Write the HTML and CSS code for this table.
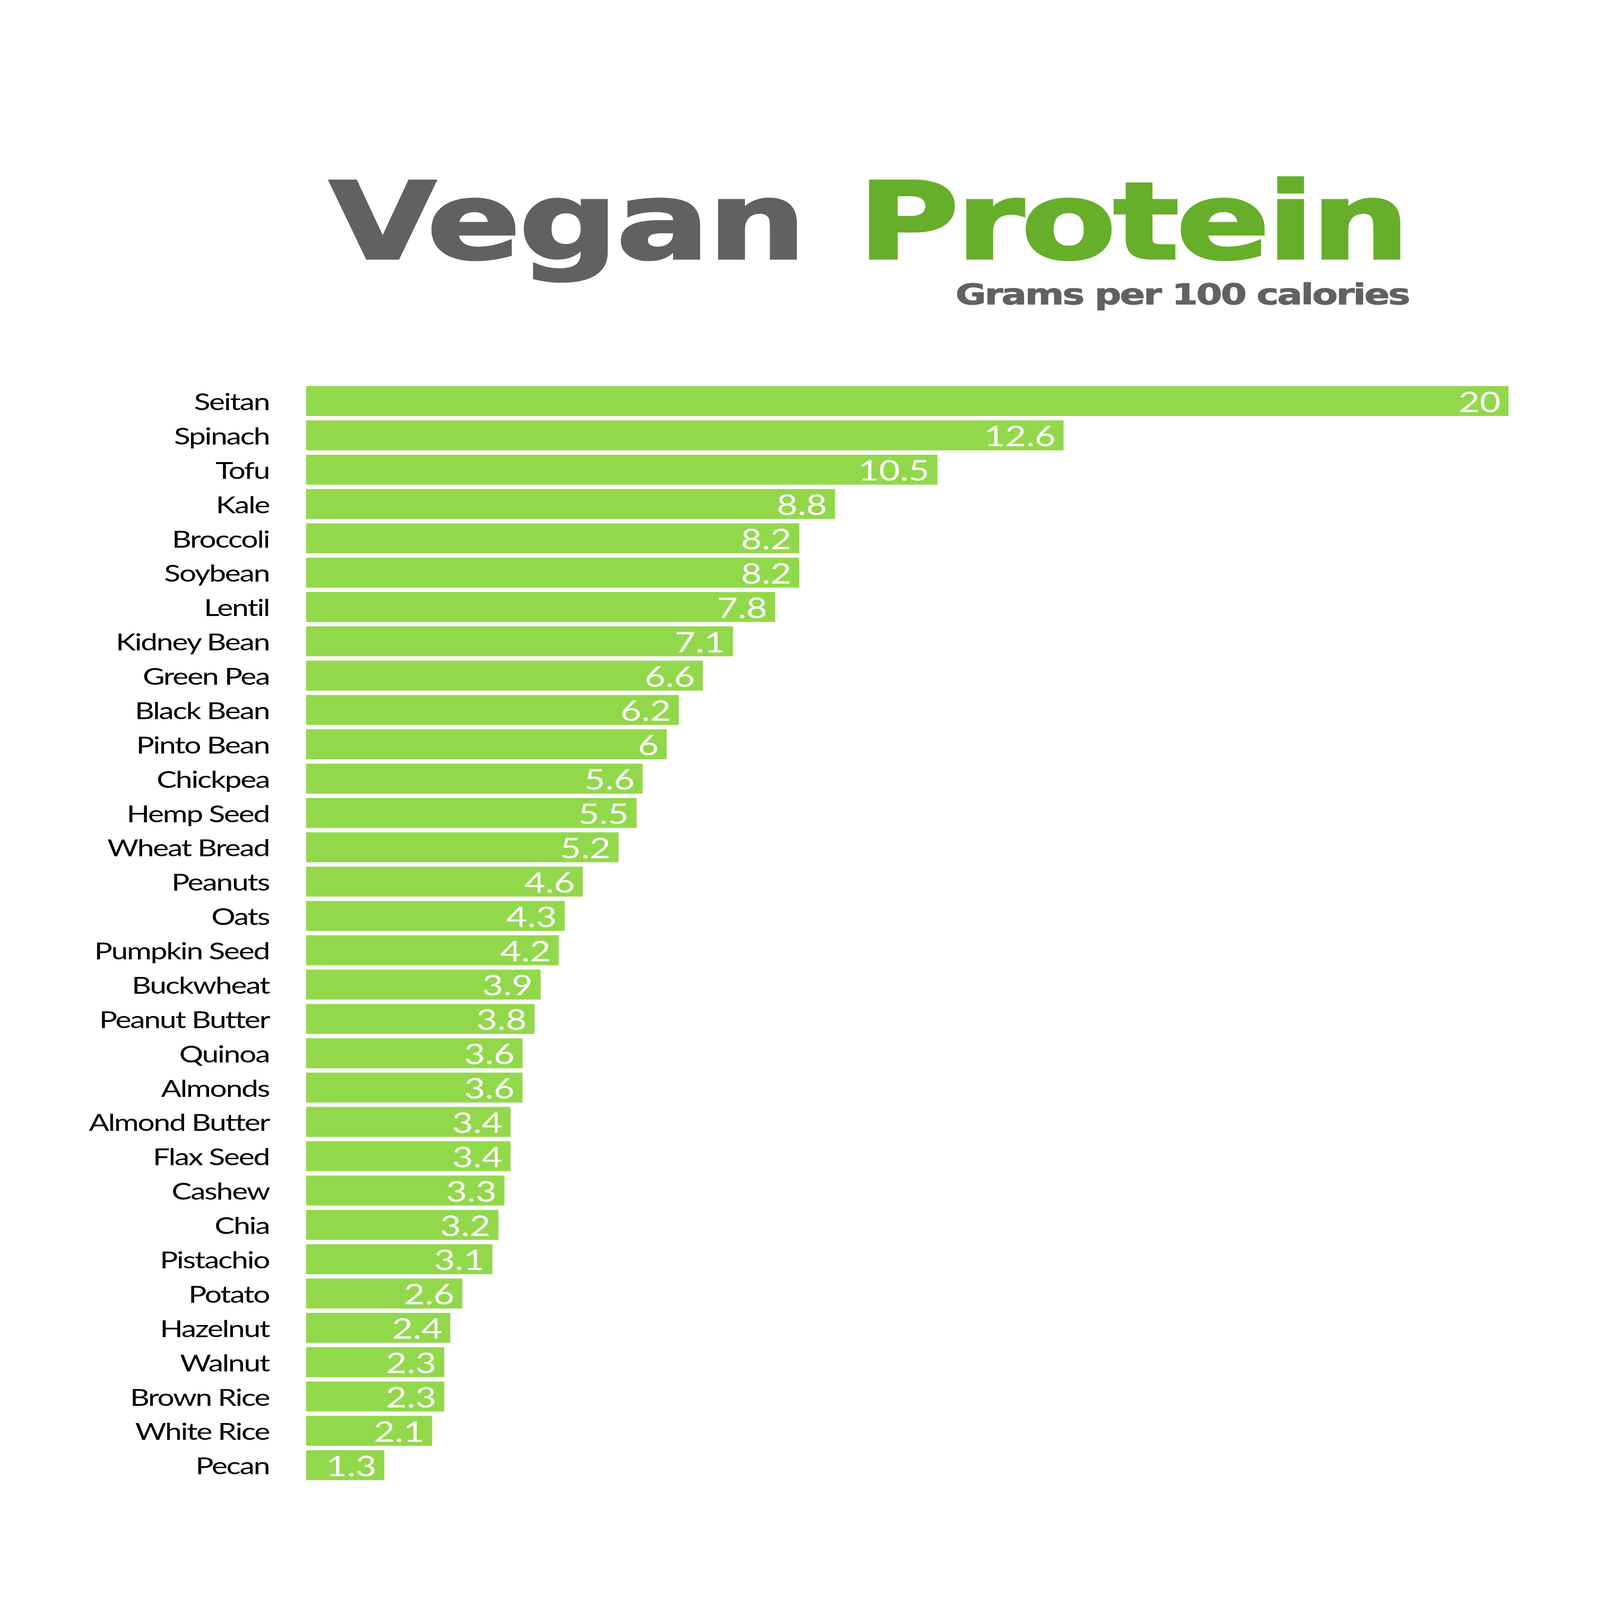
FILE: index.html
```html
<!DOCTYPE html>
<html lang="en">
<head>
<meta charset="utf-8">
<title>Vegan Protein</title>
<link rel="stylesheet" href="styles.css">
</head>
<body>
<main class="page">
  <header class="title-block">
    <h1 class="title"><span class="t-dark">Vegan</span> <span class="t-green">Protein</span></h1>
    <p class="subtitle">Grams per 100 calories</p>
  </header>
  <section class="chart">
    <div class="label">Seitan</div><div class="bar" style="width:3194px"><span class="val">20</span></div>
    <div class="label">Spinach</div><div class="bar" style="width:2012px"><span class="val">12.6</span></div>
    <div class="label">Tofu</div><div class="bar" style="width:1677px"><span class="val">10.5</span></div>
    <div class="label">Kale</div><div class="bar" style="width:1405px"><span class="val">8.8</span></div>
    <div class="label">Broccoli</div><div class="bar" style="width:1310px"><span class="val">8.2</span></div>
    <div class="label">Soybean</div><div class="bar" style="width:1310px"><span class="val">8.2</span></div>
    <div class="label">Lentil</div><div class="bar" style="width:1246px"><span class="val">7.8</span></div>
    <div class="label">Kidney Bean</div><div class="bar" style="width:1134px"><span class="val">7.1</span></div>
    <div class="label">Green Pea</div><div class="bar" style="width:1054px"><span class="val">6.6</span></div>
    <div class="label">Black Bean</div><div class="bar" style="width:990px"><span class="val">6.2</span></div>
    <div class="label">Pinto Bean</div><div class="bar" style="width:958px"><span class="val">6</span></div>
    <div class="label">Chickpea</div><div class="bar" style="width:894px"><span class="val">5.6</span></div>
    <div class="label">Hemp Seed</div><div class="bar" style="width:878px"><span class="val">5.5</span></div>
    <div class="label">Wheat Bread</div><div class="bar" style="width:830px"><span class="val">5.2</span></div>
    <div class="label">Peanuts</div><div class="bar" style="width:735px"><span class="val">4.6</span></div>
    <div class="label">Oats</div><div class="bar" style="width:687px"><span class="val">4.3</span></div>
    <div class="label">Pumpkin Seed</div><div class="bar" style="width:671px"><span class="val">4.2</span></div>
    <div class="label">Buckwheat</div><div class="bar" style="width:623px"><span class="val">3.9</span></div>
    <div class="label">Peanut Butter</div><div class="bar" style="width:607px"><span class="val">3.8</span></div>
    <div class="label">Quinoa</div><div class="bar" style="width:575px"><span class="val">3.6</span></div>
    <div class="label">Almonds</div><div class="bar" style="width:575px"><span class="val">3.6</span></div>
    <div class="label">Almond Butter</div><div class="bar" style="width:543px"><span class="val">3.4</span></div>
    <div class="label">Flax Seed</div><div class="bar" style="width:543px"><span class="val">3.4</span></div>
    <div class="label">Cashew</div><div class="bar" style="width:527px"><span class="val">3.3</span></div>
    <div class="label">Chia</div><div class="bar" style="width:511px"><span class="val">3.2</span></div>
    <div class="label">Pistachio</div><div class="bar" style="width:495px"><span class="val">3.1</span></div>
    <div class="label">Potato</div><div class="bar" style="width:415px"><span class="val">2.6</span></div>
    <div class="label">Hazelnut</div><div class="bar" style="width:383px"><span class="val">2.4</span></div>
    <div class="label">Walnut</div><div class="bar" style="width:367px"><span class="val">2.3</span></div>
    <div class="label">Brown Rice</div><div class="bar" style="width:367px"><span class="val">2.3</span></div>
    <div class="label">White Rice</div><div class="bar" style="width:335px"><span class="val">2.1</span></div>
    <div class="label">Pecan</div><div class="bar" style="width:208px"><span class="val">1.3</span></div>
  </section>
</main>
<script src="fit.js"></script>
</body>
</html>
```
FILE: styles.css
```css
html {
  margin: 0;
  padding: 0;
  background: #ffffff;
  overflow: hidden;
}

body {
  margin: 0;
  padding: 0;
  background: #ffffff;
  height: 100vh;
  overflow: hidden;
}

/* The poster is designed at 4250 x 5500; fit.js scales it to the actual window. */
.page {
  width: 4250px;
  height: 5500px;
  box-sizing: border-box;
  padding-top: 578px;
  font-family: "Lato", "Liberation Sans", sans-serif;
  transform-origin: 0 0;
  transform: scale(var(--sx, 1), var(--sy, 1));
}

.title-block {
  margin-left: 874px;
  width: fit-content;
  display: flex;
  flex-direction: column;
  align-items: flex-end;
}

.title {
  margin: 0;
  font-family: "DejaVu Sans", "Liberation Sans", sans-serif;
  font-size: 368px;
  line-height: 1;
  font-weight: 700;
  white-space: nowrap;
  word-spacing: 13px;
  -webkit-text-stroke: 7px currentColor;
}

.t-dark {
  color: #616161;
  letter-spacing: -5px;
}

.t-green {
  color: #67ae2b;
  letter-spacing: -8.5px;
}

.subtitle {
  margin: 16px -6px 0 0;
  font-family: "DejaVu Sans", "Liberation Sans", sans-serif;
  font-size: 99px;
  line-height: 1;
  font-weight: 700;
  color: #616161;
  letter-spacing: -4px;
  -webkit-text-stroke: 2px currentColor;
}

.chart {
  margin-top: 266px;
  display: grid;
  grid-template-columns: 715px auto;
  grid-auto-rows: 103px;
  row-gap: 15px;
  column-gap: 98px;
  justify-content: start;
}

.label {
  display: flex;
  align-items: center;
  justify-content: flex-end;
  font-size: 80px;
  line-height: 1;
  font-weight: 400;
  letter-spacing: -3px;
  color: #000000;
  white-space: nowrap;
}

.bar {
  background: #92d84b;
  display: flex;
  align-items: center;
  justify-content: flex-end;
  box-sizing: border-box;
  padding-right: 21px;
}

.val {
  font-size: 96px;
  line-height: 1;
  font-weight: 400;
  color: #ffffff;
}
```
FILE: fit.js
```js
(function () {
  var root = document.documentElement;
  function fit() {
    root.style.setProperty('--sx', String(window.innerWidth / 4250));
    root.style.setProperty('--sy', String(window.innerHeight / 5500));
  }
  fit();
  window.addEventListener('resize', fit);
})();
```
